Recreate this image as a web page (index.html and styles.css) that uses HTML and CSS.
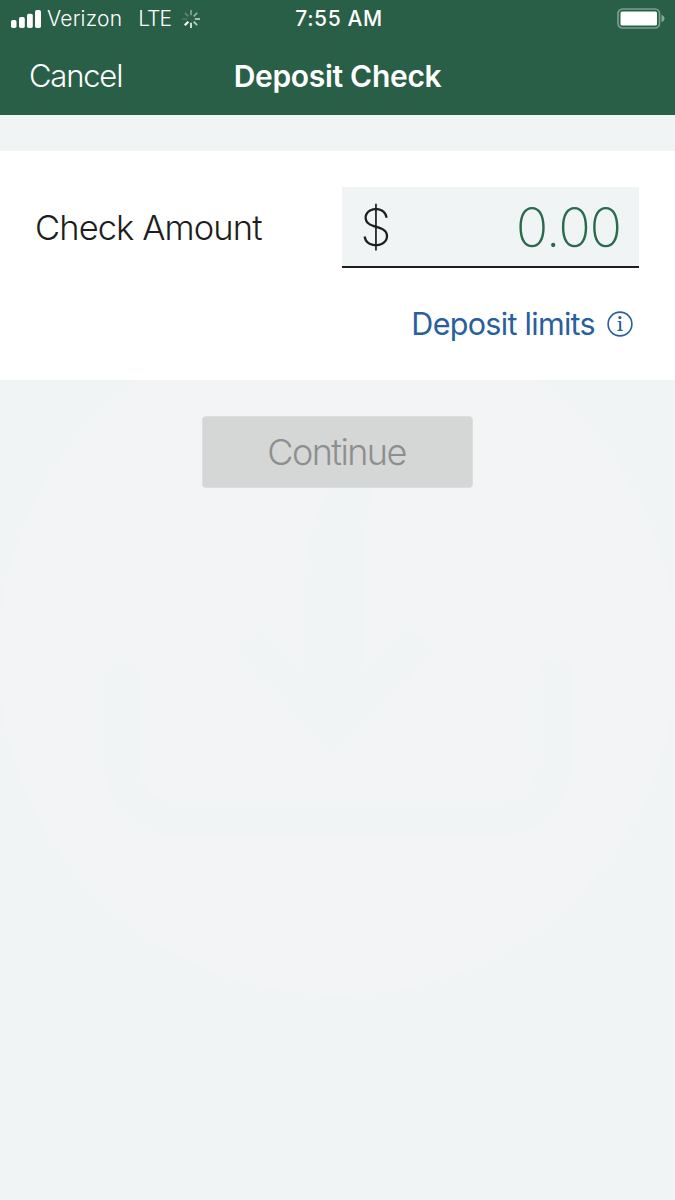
FILE: index.html
```
<!DOCTYPE html>
<html lang="en">
<head>
    <meta charset="UTF-8">
    <meta name="viewport" content="width=device-width, initial-scale=1.0">
    <title>Deposit Check</title>
    <link rel="stylesheet" href="styles.css">
</head>
<body>
    <header class="header">
        <div class="status-bar">
            <div class="carrier">
                <svg class="signal" width="31" height="18" viewBox="0 0 31 18" fill="#fff">
                    <rect x="0" y="10" width="5.5" height="8" rx="1.8"/>
                    <rect x="8" y="7" width="5.8" height="11" rx="1.8"/>
                    <rect x="16" y="3.7" width="5.8" height="14.3" rx="1.8"/>
                    <rect x="24" y="0" width="6" height="18" rx="1.8"/>
                </svg>
                <span class="carrier-name">Verizon</span>
                <span class="network">LTE</span>
                <svg class="spinner" width="18" height="18" viewBox="-9 -9 18 18" stroke="#fff" stroke-width="1.8">
                    <path d="M0-3.8V-9" opacity=".4"/>
                    <path d="M2.7-2.7L6.2-6.2" opacity=".5"/>
                    <path d="M3.8 0H9" opacity=".65"/>
                    <path d="M2.7 2.7L6.2 6.2" opacity=".7"/>
                    <path d="M0 3.8V9" opacity=".85"/>
                    <path d="M-2.7 2.7L-6.2 6.2" stroke-width="2.2"/>
                    <path d="M-3.8 0H-9" opacity=".15"/>
                    <path d="M-2.7-2.7L-6.2-6.2" opacity=".25"/>
                </svg>
            </div>
            <span class="time">7:55 AM</span>
            <svg class="battery" width="48" height="21" viewBox="0 0 48 21">
                <rect x="1" y="1" width="41.5" height="19" rx="4.5" fill="none" stroke="#76a18f" stroke-width="1.7"/>
                <rect x="3.5" y="3.5" width="36.5" height="14" rx="1.5" fill="#fff"/>
                <path d="M44.5 7q3 1 3 3.5T44.5 14z" fill="#83a99a"/>
            </svg>
        </div>
        <nav class="nav">
            <a class="cancel">Cancel</a>
            <h1>Deposit Check</h1>
        </nav>
    </header>

    <section class="card">
        <div class="amount-row">
            <label class="amount-label">Check Amount</label>
            <div class="amount-field">
                <span class="currency">$</span>
                <span class="amount">0.00</span>
            </div>
        </div>
        <a class="limits">
            <span>Deposit limits</span>
            <svg width="26" height="26" viewBox="0 0 26 26" fill="none" stroke="#2a5f9e">
                <circle cx="13" cy="13" r="11.9" stroke-width="1.6"/>
                <path d="M13.2 10.2v9" stroke-width="2"/>
                <path d="M10.7 10.5h2.6M10.5 19.3h5.2" stroke-width="1.2"/>
                <circle cx="12.9" cy="6.6" r="1.6" fill="#2a5f9e" stroke="none"/>
            </svg>
        </a>
    </section>

    <main class="content">
        <svg class="watermark" width="675" height="820" viewBox="0 380 675 820">
            <circle cx="337.5" cy="656" r="339" fill="#f3f4f6"/>
            <g fill="#f0f4f5">
                <path d="M329 487C313 515 303.5 555 303.5 595V670L265 630Q245 634 228 648L334 756L438 648Q423 634 405 630L364 670V580C364 542 366 515 375 487Z"/>
                <path d="M121 675V755Q121 819 185 819H491Q555 819 555 755V675" fill="none" stroke="#f0f4f5" stroke-width="35" stroke-linecap="round"/>
            </g>
        </svg>
        <button class="continue" disabled>Continue</button>
    </main>
</body>
</html>
```
FILE: styles.css
```
* {
    margin: 0;
    padding: 0;
    box-sizing: border-box;
    font-family: Inter, "Liberation Sans", sans-serif;
}

body {
    background: #f0f4f5;
    height: 1200px;
    display: flex;
    flex-direction: column;
    overflow: hidden;
}

.header {
    background: #295e47;
    color: white;
    height: 115px;
    flex-shrink: 0;
}

.status-bar {
    height: 37px;
    padding: 0 10px 0 11px;
    display: grid;
    grid-template-columns: 1fr auto 1fr;
    align-items: center;
}

.carrier {
    display: flex;
    align-items: center;
    font-size: 21px;
    line-height: 37px;
}

.carrier-name {
    margin-left: 5px;
    font-weight: 350;
    letter-spacing: 0.2px;
}

.network {
    margin-left: 16px;
    font-weight: 350;
    letter-spacing: -1px;
}

.spinner {
    margin-left: 11px;
}

.time {
    padding-left: 2px;
    font-size: 21px;
    font-weight: 500;
    letter-spacing: 0.6px;
}

.battery {
    justify-self: end;
}

.nav {
    height: 77px;
    padding: 0 29px;
    display: grid;
    grid-template-columns: 1fr auto 1fr;
    align-items: center;
}

.cancel {
    font-size: 31px;
    font-weight: 350;
    letter-spacing: -1.2px;
}

h1 {
    font-size: 30px;
    font-weight: 600;
    letter-spacing: -0.3px;
}

.card {
    background: white;
    margin-top: 36px;
    padding: 36px;
    height: 229px;
    flex-shrink: 0;
}

.amount-row {
    display: flex;
    justify-content: space-between;
    align-items: center;
}

.amount-label {
    margin-left: -1px;
    font-size: 34.5px;
    font-weight: 300;
    letter-spacing: -0.9px;
    color: #1d1d1d;
}

.amount-field {
    width: 297px;
    height: 81px;
    padding: 2px 18px 0;
    background: #f0f4f5;
    border-bottom: 2px solid #1d1d1d;
    display: flex;
    justify-content: space-between;
    align-items: center;
    font-size: 54px;
    font-weight: 200;
}

.currency {
    color: #1d1d1d;
    font-size: 51px;
}

.amount {
    color: #296b4f;
    letter-spacing: -1.2px;
}

.limits {
    display: flex;
    justify-content: flex-end;
    align-items: center;
    gap: 12px;
    margin-top: 37px;
    padding-right: 6px;
    font-size: 30.5px;
    letter-spacing: -0.7px;
    color: #2a5f9e;
}

.content {
    position: relative;
    flex: 1;
    padding-top: 36px;
    text-align: center;
}

/* faint deposit icon behind the content */
.watermark {
    position: absolute;
    top: 0;
    left: 0;
}

.continue {
    position: relative;
    width: 271px;
    height: 72px;
    padding-right: 2px;
    border: 1px solid #dcdedd;
    border-radius: 4px;
    background: #d5d7d6;
    color: #8d8f8e;
    font-size: 36px;
    font-weight: 300;
    letter-spacing: -1.6px;
}
```
